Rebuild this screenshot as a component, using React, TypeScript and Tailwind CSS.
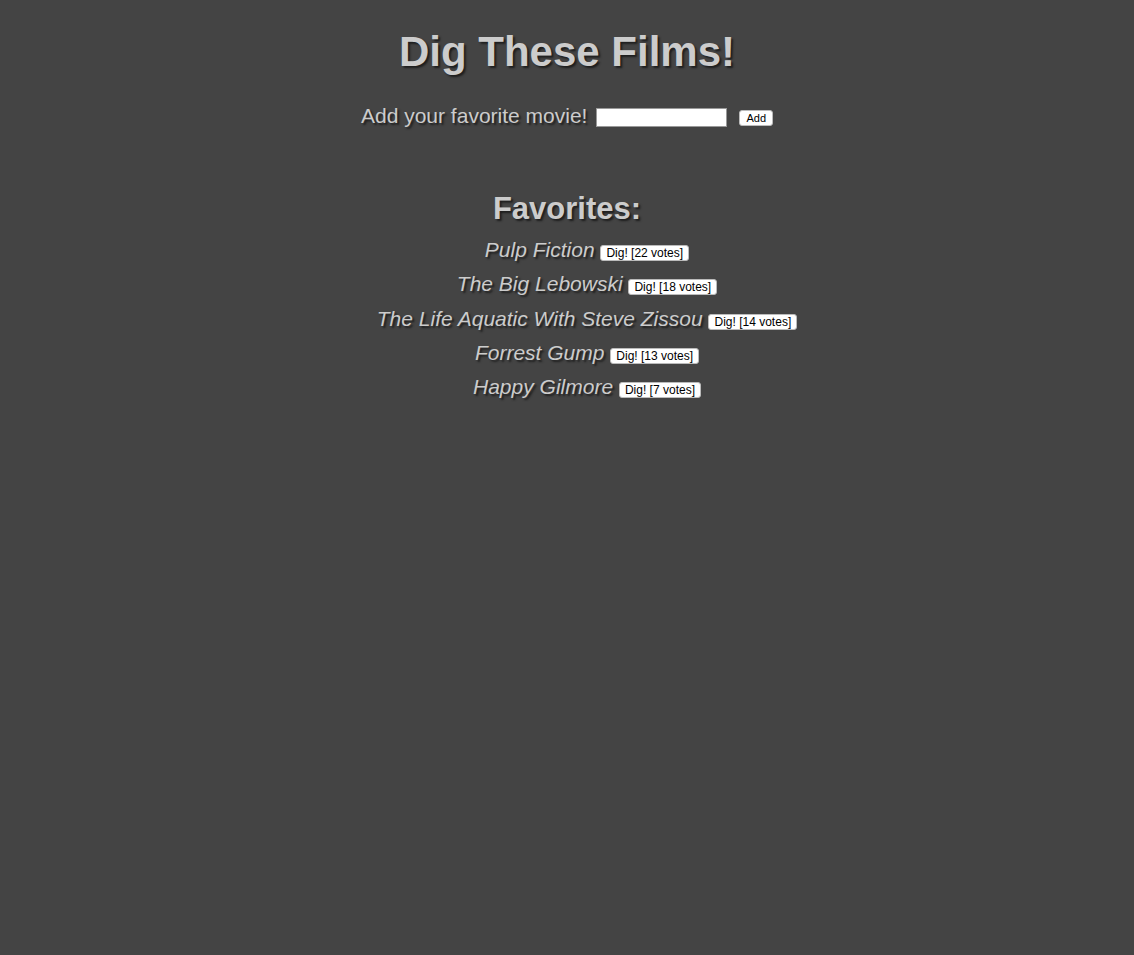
import React, { useState } from 'react';

interface Film {
    title: string;
    votes: number;
}

const initialFilms: Film[] = [
    { title: 'Pulp Fiction', votes: 22 },
    { title: 'The Big Lebowski', votes: 18 },
    { title: 'The Life Aquatic With Steve Zissou', votes: 14 },
    { title: 'Forrest Gump', votes: 13 },
    { title: 'Happy Gilmore', votes: 7 },
];

const App: React.FC = () => {
    const [films, setFilms] = useState<Film[]>(initialFilms);
    const [draft, setDraft] = useState('');

    const addFilm = () => {
        const title = draft.trim();
        if (!title) return;
        setFilms([...films, { title, votes: 0 }]);
        setDraft('');
    };

    const dig = (index: number) => {
        const next = films.map((f, i) => (i === index ? { ...f, votes: f.votes + 1 } : f));
        next.sort((a, b) => b.votes - a.votes);
        setFilms(next);
    };

    return (
        <div className="min-h-screen bg-[#444444] text-[#cccccc] text-center font-['Liberation_Sans',Arial,sans-serif] [text-shadow:2px_2px_2px_#1e1e1e]">
            <h1 className="pt-[28px] text-[42px] leading-[48px] font-bold">Dig These Films!</h1>

            <div className="mt-[31px] flex items-center justify-center text-[21px] leading-[24px]">
                <span className="-mt-[3px]">Add your favorite movie!</span>
                <input
                    value={draft}
                    onChange={e => setDraft(e.target.value)}
                    className="ml-[9px] w-[131px] h-[19px] bg-white border border-[#999] text-[13px] text-black px-1 [text-shadow:none] outline-none"
                />
                <button
                    onClick={addFilm}
                    className="ml-[12px] h-[16px] px-[6px] bg-white rounded-[3px] border border-[#bbb] text-[11px] leading-[14px] text-black [text-shadow:none]"
                >
                    Add
                </button>
            </div>

            <h2 className="mt-[63px] text-[31px] leading-[36px] font-bold">Favorites:</h2>

            <ul className="pl-[40px]">
                {films.map((film, index) => (
                    <li key={film.title} className="text-[21px] leading-[34.25px] italic first:mt-[6px]">
                        {film.title}{' '}
                        <button
                            onClick={() => dig(index)}
                            className="not-italic align-baseline h-[16px] px-[5px] bg-white rounded-[3px] border border-[#bbb] text-[12px] leading-[14px] text-black [text-shadow:none]"
                        >
                            Dig! [{film.votes} votes]
                        </button>
                    </li>
                ))}
            </ul>
        </div>
    );
};

export default App;
